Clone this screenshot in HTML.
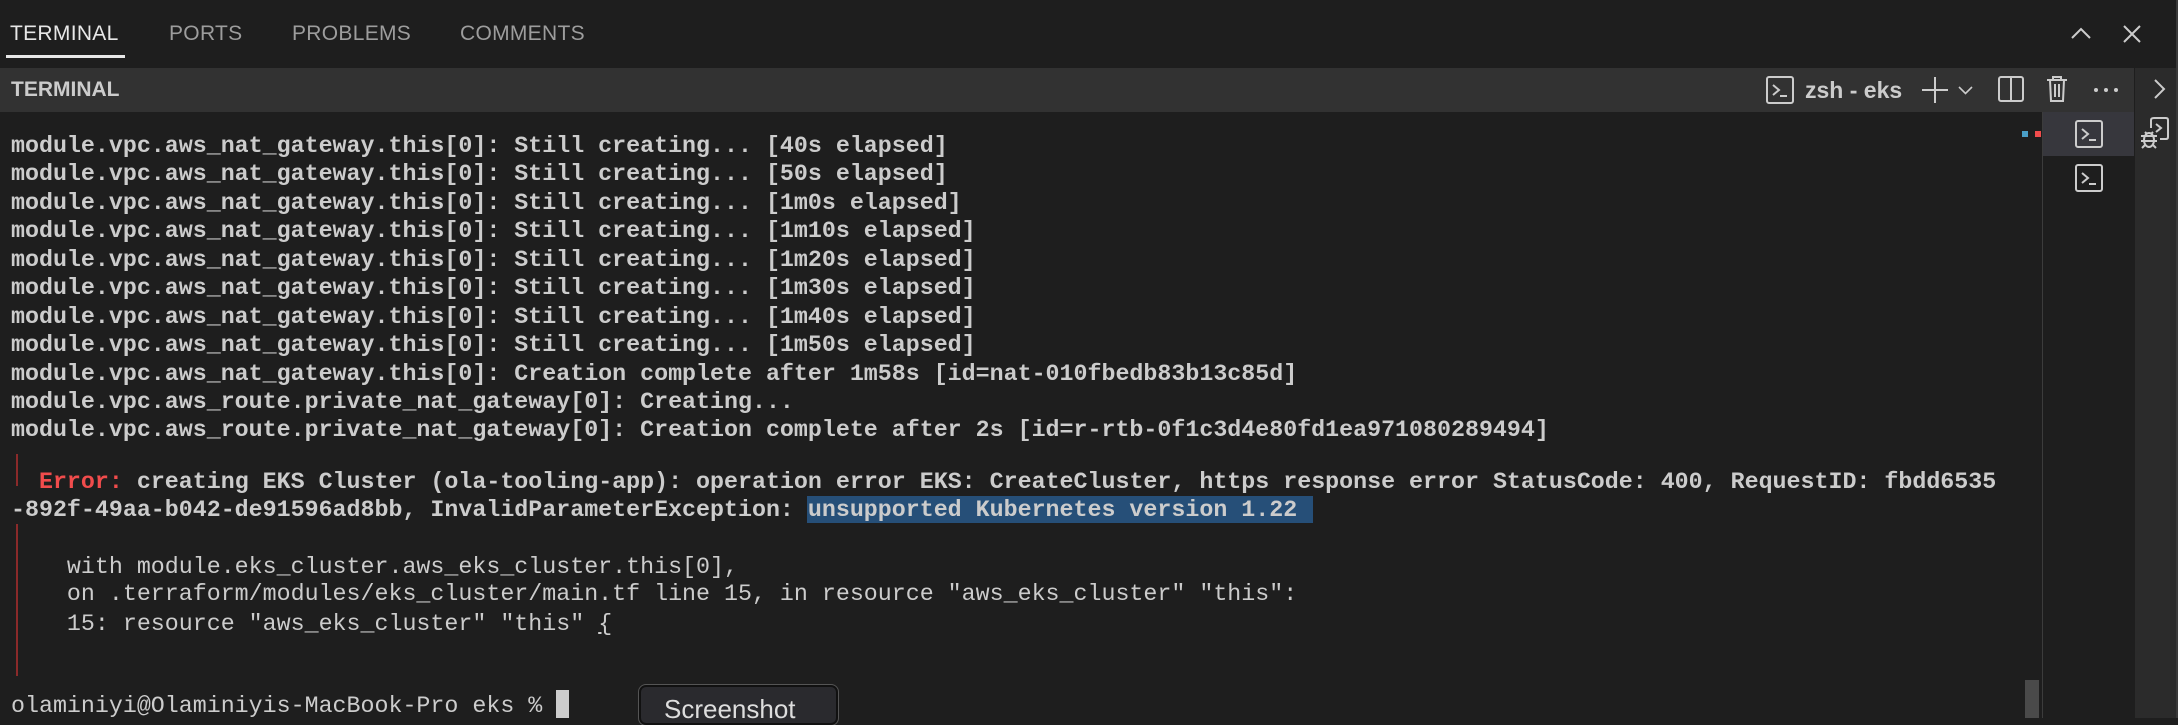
<!DOCTYPE html>
<html><head><meta charset="utf-8"><style>
*{margin:0;padding:0;box-sizing:border-box}
body{width:2178px;height:718px;background:#1e1e1e;overflow:hidden;position:relative;font-family:"Liberation Sans",sans-serif;color:#ccc}
.a{position:absolute}
.tab{position:absolute;top:22px;font-size:21px;color:#9d9d9d;letter-spacing:.3px}
.t{position:absolute;left:11px;font-family:"Liberation Mono",monospace;font-weight:bold;font-size:23.3px;line-height:28px;height:28px;white-space:pre;color:#cccccc}
.n{font-weight:normal}
svg{position:absolute;overflow:visible}
</style></head><body>
<div class="tab" style="left:10px;color:#e7e7e7">TERMINAL</div>
<div class="a" style="left:6px;top:55px;width:119px;height:3px;background:#e7e7e7"></div>
<div class="tab" style="left:169px">PORTS</div>
<div class="tab" style="left:292px">PROBLEMS</div>
<div class="tab" style="left:460px">COMMENTS</div>

<div class="a" style="left:0;top:68px;width:2134px;height:44px;background:#323232"></div>
<div class="a" style="left:11px;top:78px;font-size:21px;font-weight:bold;color:#ccc">TERMINAL</div>
<svg style="left:1766px;top:76px" width="28" height="28"><rect x="1" y="1" width="26" height="26" rx="2" stroke="#ccc" stroke-width="2" fill="none"/><path d="M7 9 L13 14 L7 19 M14 20 L21 20" stroke="#ccc" stroke-width="2" fill="none"/></svg>
<div class="a" style="left:1805px;top:77px;font-size:23px;font-weight:bold;color:#ccc">zsh - eks</div>
<svg style="left:1922px;top:77px" width="26" height="26"><path d="M13 0 V26 M0 13 H26" stroke="#ccc" stroke-width="2"/></svg>
<svg style="left:1958px;top:86px" width="15" height="9"><path d="M1 1 L7.5 7.5 L14 1" stroke="#ccc" stroke-width="1.6" fill="none"/></svg>
<svg style="left:1998px;top:76px" width="26" height="26"><rect x="1" y="1" width="24" height="24" rx="2" stroke="#ccc" stroke-width="2" fill="none"/><path d="M13 1 V25" stroke="#ccc" stroke-width="2"/></svg>
<svg style="left:2046px;top:76px" width="22" height="26"><path d="M1 4 H21 M7 4 V1 H15 V4 M4 4 L5 25 H17 L18 4 M9 8 V21 M13 8 V21" stroke="#ccc" stroke-width="2" fill="none"/></svg>
<svg style="left:2094px;top:88px" width="26" height="4"><circle cx="2" cy="2" r="2" fill="#ccc"/><circle cx="12" cy="2" r="2" fill="#ccc"/><circle cx="22" cy="2" r="2" fill="#ccc"/></svg>

<div class="a" style="left:2042px;top:112px;width:1px;height:606px;background:#3c3c3c"></div>
<div class="a" style="left:2043px;top:112px;width:91px;height:44px;background:#37373d"></div>
<svg style="left:2075px;top:120px" width="28" height="28"><rect x="1" y="1" width="26" height="26" rx="2" stroke="#ccc" stroke-width="2" fill="none"/><path d="M7 9 L13 14 L7 19 M14 20 L21 20" stroke="#ccc" stroke-width="2" fill="none"/></svg>
<svg style="left:2075px;top:164px" width="28" height="28"><rect x="1" y="1" width="26" height="26" rx="2" stroke="#ccc" stroke-width="2" fill="none"/><path d="M7 9 L13 14 L7 19 M14 20 L21 20" stroke="#ccc" stroke-width="2" fill="none"/></svg>
<div class="a" style="left:2135px;top:68px;width:43px;height:650px;background:#2b2b2b"></div>
<div class="a" style="left:2176px;top:0;width:2px;height:718px;background:#3a3a3a"></div>
<svg style="left:2154px;top:79px" width="10" height="20"><path d="M1 1 L10 10 L1 19" stroke="#ccc" stroke-width="2" fill="none"/></svg>
<svg style="left:2140px;top:117px" width="38" height="32"><path d="M14 1 H26 Q28 1 28 3 V20 Q28 22 26 22 H20" stroke="#ccc" stroke-width="2" fill="none"/><path d="M14 1 Q11 1 11 3 V11" stroke="#ccc" stroke-width="2" fill="none"/><path d="M16 7 L21 11 L16 15" stroke="#ccc" stroke-width="2" fill="none"/><ellipse cx="9" cy="23" rx="5" ry="7" fill="#2b2b2b" stroke="#ccc" stroke-width="2"/><path d="M1 19 H17 M1 24 H17 M2 31 L5 28 M16 31 L13 28 M5 15 L7 17 M13 15 L11 17" stroke="#ccc" stroke-width="2"/></svg>
<div class="a" style="left:2022px;top:131px;width:6px;height:6px;background:#4a9fc7"></div>
<div class="a" style="left:2035px;top:131px;width:6px;height:6px;background:#f14c4c"></div>

<svg style="left:2071px;top:27px" width="20" height="12"><path d="M1 11 L10 2 L19 11" stroke="#ccc" stroke-width="2" fill="none"/></svg>
<svg style="left:2123px;top:25px" width="18" height="18"><path d="M1 1 L17 17 M17 1 L1 17" stroke="#ccc" stroke-width="2" fill="none"/></svg>

<div class="t" style="top:132px">module.vpc.aws_nat_gateway.this[0]: Still creating... [40s elapsed]</div>
<div class="t" style="top:160px">module.vpc.aws_nat_gateway.this[0]: Still creating... [50s elapsed]</div>
<div class="t" style="top:189px">module.vpc.aws_nat_gateway.this[0]: Still creating... [1m0s elapsed]</div>
<div class="t" style="top:217px">module.vpc.aws_nat_gateway.this[0]: Still creating... [1m10s elapsed]</div>
<div class="t" style="top:246px">module.vpc.aws_nat_gateway.this[0]: Still creating... [1m20s elapsed]</div>
<div class="t" style="top:274px">module.vpc.aws_nat_gateway.this[0]: Still creating... [1m30s elapsed]</div>
<div class="t" style="top:303px">module.vpc.aws_nat_gateway.this[0]: Still creating... [1m40s elapsed]</div>
<div class="t" style="top:331px">module.vpc.aws_nat_gateway.this[0]: Still creating... [1m50s elapsed]</div>
<div class="t" style="top:360px">module.vpc.aws_nat_gateway.this[0]: Creation complete after 1m58s [id=nat-010fbedb83b13c85d]</div>
<div class="t" style="top:388px">module.vpc.aws_route.private_nat_gateway[0]: Creating...</div>
<div class="t" style="top:416px">module.vpc.aws_route.private_nat_gateway[0]: Creation complete after 2s [id=r-rtb-0f1c3d4e80fd1ea971080289494]</div>

<div class="a" style="left:16px;top:454px;width:2px;height:32px;background:#8b2a2a"></div>
<div class="a" style="left:16px;top:524px;width:2px;height:152px;background:#8b2a2a"></div>
<div class="a" style="left:807px;top:496px;width:506px;height:27px;background:#264f78"></div>
<div class="t" style="top:468px">  <span style="color:#f14c4c">Error:</span> creating EKS Cluster (ola-tooling-app): operation error EKS: CreateCluster, https response error StatusCode: 400, RequestID: fbdd6535</div>
<div class="t" style="top:496px">-892f-49aa-b042-de91596ad8bb, InvalidParameterException: unsupported Kubernetes version 1.22</div>
<div class="t n" style="top:553px">    with module.eks_cluster.aws_eks_cluster.this[0],</div>
<div class="t n" style="top:580px">    on .terraform/modules/eks_cluster/main.tf line 15, in resource "aws_eks_cluster" "this":</div>
<div class="t n" style="top:610px">    15: resource "aws_eks_cluster" "this" <u>{</u></div>
<div class="t n" style="top:692px">olaminiyi@Olaminiyis-MacBook-Pro eks %</div>
<div class="a" style="left:556px;top:690px;width:13px;height:28px;background:#ccc"></div>
<div class="a" style="left:2025px;top:680px;width:14px;height:38px;background:#4a4a4a"></div>
<div class="a" style="left:639px;top:685px;width:199px;height:40px;background:#2a2a2e;border:2px solid #111;border-radius:7px;box-shadow:0 0 0 1px #555"></div>
<div class="a" style="left:664px;top:694px;font-size:26px;color:#ddd">Screenshot</div>
</body></html>
